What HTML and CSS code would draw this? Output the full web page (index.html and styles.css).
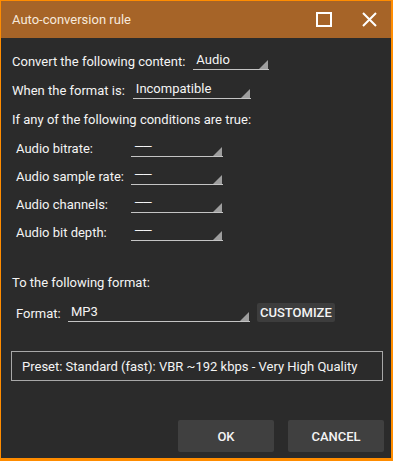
FILE: index.html
```html
<!DOCTYPE html>
<html>
<head>
<meta charset="utf-8">
<link rel="stylesheet" href="styles.css">
</head>
<body>
<div class="window">
  <div class="titlebar">
    <span class="title">Auto-conversion rule</span>
    <div class="controls">
      <svg class="ctl" width="16" height="15" viewBox="0 0 16 15"><rect x="1" y="1" width="14" height="13" fill="none" stroke="#fff" stroke-width="2"/></svg>
      <svg class="ctl close" width="15" height="15" viewBox="0 0 15 15"><path d="M1 1 L14 14 M14 1 L1 14" stroke="#fff" stroke-width="2" fill="none"/></svg>
    </div>
  </div>
  <div class="content">
    <div class="row r29">
      <span class="label">Convert the following content:</span>
      <div class="dd w76"><span>Audio</span></div>
    </div>
    <div class="row r29">
      <span class="label">When the format is:</span>
      <div class="dd w118"><span>Incompatible</span></div>
    </div>
    <div class="row r29">
      <span class="label">If any of the following conditions are true:</span>
    </div>
    <div class="conds">
      <span class="clabel">Audio bitrate:</span>
      <div class="dd w92"><span class="dash">——</span></div>
      <span class="clabel">Audio sample rate:</span>
      <div class="dd w92"><span class="dash">——</span></div>
      <span class="clabel">Audio channels:</span>
      <div class="dd w92"><span class="dash">——</span></div>
      <span class="clabel">Audio bit depth:</span>
      <div class="dd w92"><span class="dash">——</span></div>
    </div>
    <div class="row r28 to">
      <span class="label">To the following format:</span>
    </div>
    <div class="row r28 fmt">
      <span class="flabel">Format:</span>
      <div class="dd w182"><span>MP3</span></div>
      <button class="custom">CUSTOMIZE</button>
    </div>
    <div class="preset">Preset: Standard (fast): VBR ~192 kbps - Very High Quality</div>
  </div>
  <div class="footer">
    <button class="btn">OK</button>
    <button class="btn">CANCEL</button>
  </div>
</div>
</body>
</html>
```
FILE: styles.css
```css
* { box-sizing: border-box; }
html, body { margin: 0; padding: 0; background: #2b2b2b; }
body { font-family: Roboto, "Noto Sans", sans-serif; font-size: 13px; color: #f4f4f4; }
.window {
  width: 393px; height: 461px;
  border-style: solid; border-color: #ff8c00;
  border-width: 1px 2px 3px 1px;
  background: #2b2b2b;
  display: flex; flex-direction: column;
}
.titlebar {
  height: 37px; flex: none;
  background: #a66428;
  display: flex; align-items: center; justify-content: space-between;
  padding-left: 11px;
}
.title { color: #f6e9dc; font-size: 13px; }
.controls { display: flex; align-items: center; gap: 30px; margin-right: 14px; }
.ctl { display: block; }
.content { flex: 1; padding: 9px 0 0 11px; display: flex; flex-direction: column; }
.row { display: flex; align-items: center; }
.r29 { height: 29px; }
.r28 { height: 28px; }
.label { margin-right: 8px; }
.dd {
  height: 18px; position: relative;
  border-bottom: 1px solid #c4c4c4;
  padding-left: 3px; display: flex; align-items: center;
  margin-top: -1px;
}
.dd::after {
  content: ""; position: absolute; right: 1px; bottom: 0;
  width: 0; height: 0;
  border-left: 9px solid transparent;
  border-bottom: 9px solid #9e9e9e;
}
.dd span { line-height: 16px; margin-top: -1px; }
.dd .dash { letter-spacing: -2px; }
.w76 { width: 76px; }
.w118 { width: 118px; }
.w92 { width: 92px; }
.w182 { width: 182px; }
.conds {
  display: grid; grid-template-columns: 115px 92px;
  grid-auto-rows: 28px; align-items: center;
  padding-left: 4px;
}
.to { margin-top: 22px; }
.fmt { margin-top: 3px; padding-left: 4px; }
.flabel { width: 52px; }
.custom {
  margin-left: 7px; height: 19px; padding: 0 3px;
  background: #3d3d3d; color: #f4f4f4; border: none; border-radius: 2px;
  font-family: Roboto, sans-serif; font-size: 13px; font-weight: 500;
  margin-top: -1px;
}
.preset {
  margin-top: 24px; width: 372px; height: 30px; margin-left: -1px;
  border: 1px solid #a8a8a8;
  display: flex; align-items: center; padding-left: 10px;
}
.footer { display: flex; justify-content: flex-end; gap: 14px; padding: 0 7px 6px 0; }
.btn {
  width: 96px; height: 32px; background: #404040; border: none; border-radius: 2px;
  color: #f4f4f4; font-family: Roboto, sans-serif; font-size: 13px; font-weight: 500;
}
```
